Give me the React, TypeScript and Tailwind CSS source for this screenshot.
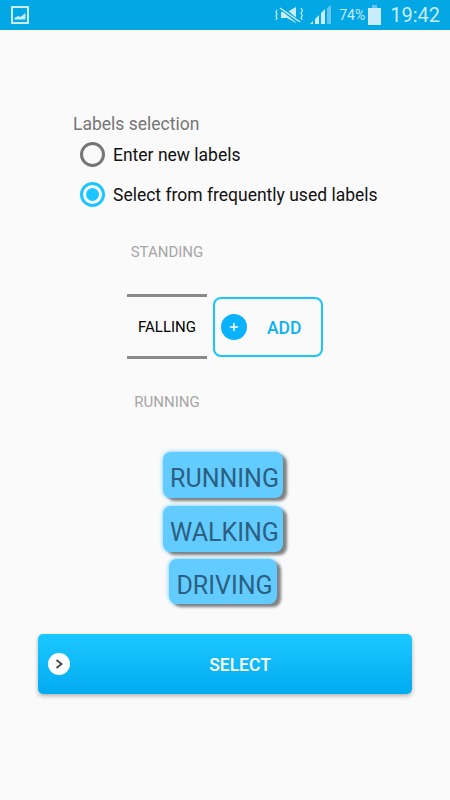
import { Plus } from "lucide-react";

const chips = [
  { text: "RUNNING", width: "w-[120px]", size: "h-[46px]", margin: "mt-0" },
  { text: "WALKING", width: "w-[120px]", size: "h-[46px]", margin: "mt-[8px]" },
  { text: "DRIVING", width: "w-[108px]", size: "h-[45px]", margin: "mt-[7px]" },
];

function StatusBar() {
  return (
    <div className="h-[30px] bg-[#03a7e4] flex items-center pl-[11px] pr-[10px] text-[#c8ecfa]">
      <svg width="18" height="18" viewBox="0 0 18 18" fill="none">
        <rect x="1" y="1" width="16" height="16" stroke="#c8ecfa" strokeWidth="2" />
        <path d="M3.5 13.5 L3.5 12 L7 10 L9.5 11 L14.5 7 L14.5 13.5 Z" fill="#c8ecfa" />
      </svg>
      <div className="ml-auto flex items-center">
        <svg width="30" height="18" viewBox="0 0 30 18" fill="none">
          <path d="M6 6 H12 L21 1 V17 L12 12 H6 Z" fill="#c8ecfa" />
          <path d="M5 1 L25 17" stroke="#03a7e4" strokeWidth="4" />
          <path d="M5 2 L25 16" stroke="#c8ecfa" strokeWidth="1.5" />
          <path d="M2 4 L0.8 6 L2 8 L0.8 10 L2 12 L0.8 14 M26 2 L27.4 4.5 L26 7 L27.4 9.5 L26 12 L27.4 14" stroke="#c8ecfa" strokeWidth="1.2" />
        </svg>
        <svg className="ml-[5px]" width="22" height="20" viewBox="0 0 22 20">
          <path d="M0 19 L3 16 V19 Z" fill="#c8ecfa" />
          <path d="M5 19 V14 L9 10 V19 Z" fill="#c8ecfa" />
          <path d="M11 19 V8 L15 4 V19 Z" fill="#c8ecfa" />
          <path d="M17 19 V3 L21 0 V19 Z" fill="#63c5ed" />
        </svg>
        <span className="ml-[7px] text-[14px] leading-none">74%</span>
        <svg className="ml-[3px]" width="13" height="20" viewBox="0 0 13 20">
          <rect x="4" y="0" width="5" height="3" fill="#63c5ed" />
          <rect x="0" y="3" width="13" height="17" fill="#c8ecfa" />
        </svg>
        <span className="ml-[9px] text-[20px] leading-none">19:42</span>
      </div>
    </div>
  );
}

function Radio({ checked, label }: { checked?: boolean; label: string }) {
  return (
    <div className="flex items-center h-[25px]">
      <div
        className={
          checked
            ? "w-[25px] h-[25px] rounded-full border-[3px] border-[#1ac6ff] flex items-center justify-center"
            : "w-[25px] h-[25px] rounded-full border-[3px] border-[#757575]"
        }
      >
        {checked && <div className="w-[13px] h-[13px] rounded-full bg-[#1ac6ff]" />}
      </div>
      <span className="ml-[8px] pt-[2px] text-[17.5px] text-[#111]">{label}</span>
    </div>
  );
}

export default function App() {
  return (
    <div className="w-[450px] h-[800px] bg-[#fafafa] overflow-hidden font-['Roboto',sans-serif]">
      <StatusBar />

      <div className="pt-[84px] pl-[73px] text-[17.5px] leading-[20px] text-[#757575]">Labels selection</div>
      <div className="pl-[80px] pt-[8px] flex flex-col gap-[15px]">
        <Radio label="Enter new labels" />
        <Radio checked label="Select from frequently used labels" />
      </div>

      <div className="mt-[35px] ml-[127px] flex items-start">
        <div className="w-[80px] flex flex-col items-center text-[15px] leading-[20px]">
          <div className="h-[20px] text-[#a6a6a6]">STANDING</div>
          <div className="mt-[32px] w-full h-[65px] border-y-[3px] border-[#8a8a8a] flex items-center justify-center text-black">
            FALLING
          </div>
          <div className="mt-[33px] h-[20px] text-[#a6a6a6]">RUNNING</div>
        </div>
        <div className="ml-[6px] mt-[55px] w-[110px] h-[60px] rounded-[8px] border-2 border-[#1ac6ff] flex items-center pl-[6px]">
          <div className="w-[26px] h-[26px] rounded-full bg-[#0ab2fb] flex items-center justify-center">
            <Plus size={12} color="#ffffff" strokeWidth={3} />
          </div>
          <span className="ml-[20px] pt-[2px] text-[17.5px] font-medium text-[#0ab2f5]">ADD</span>
        </div>
      </div>

      <div className="mt-[40px] flex flex-col items-center pr-[4px]">
        {chips.map((c) => (
          <div
            key={c.text}
            className={`${c.width} ${c.size} ${c.margin} rounded-[8px] bg-[#62cbff] shadow-[4px_3px_3px_#808080,0_0_4px_#62cbff] flex items-center justify-center pl-[3px] pt-[7px] text-[25px] leading-none text-[#2c5f80]`}
          >
            {c.text}
          </div>
        ))}
      </div>

      <div className="mt-[30px] mx-[38px] h-[60px] rounded-[5px] bg-gradient-to-b from-[#1bc8ff] to-[#01abf0] shadow-[0_2px_4px_rgba(0,0,0,0.3)] flex items-center pl-[10px] pr-[10px] relative">
        <div className="w-[22px] h-[22px] rounded-full bg-white flex items-center justify-center">
          <svg width="10" height="10" viewBox="0 0 10 10" fill="none">
            <path d="M2.5 1 L7.5 5 L2.5 9" stroke="#444" strokeWidth="1.8" />
          </svg>
        </div>
        <span className="flex-1 text-center pl-[8px] pt-[2px] text-[17.5px] font-medium text-white">SELECT</span>
      </div>
    </div>
  );
}
